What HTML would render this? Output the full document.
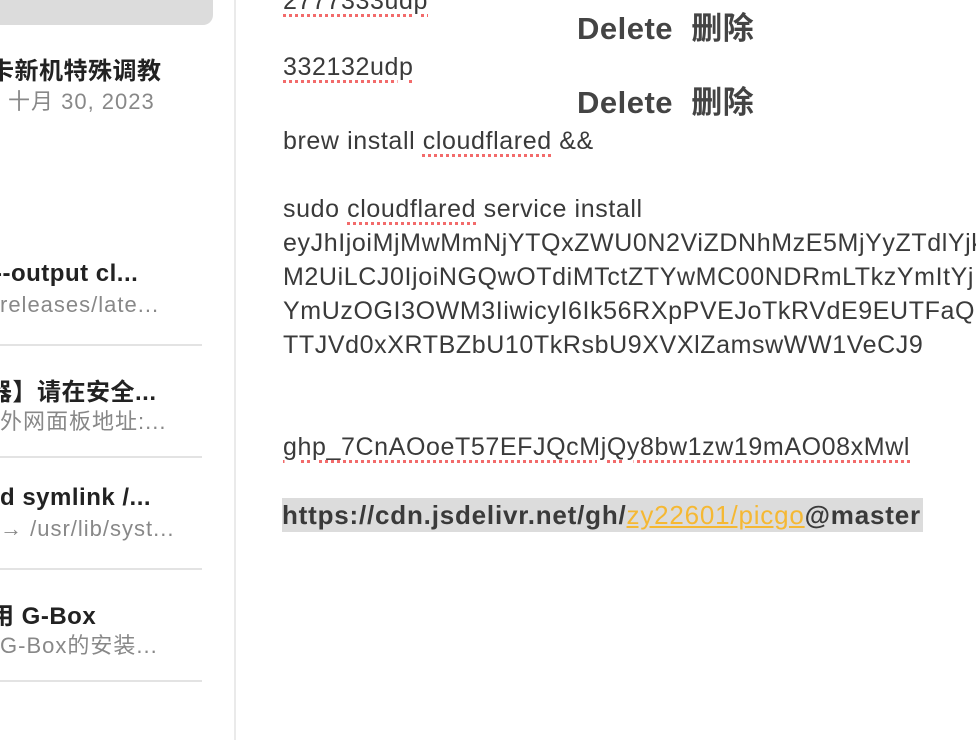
<!DOCTYPE html>
<html><head><meta charset="utf-8"><style>
body{margin:0;width:976px;height:740px;overflow:hidden;background:#fff;font-family:"Liberation Sans","Noto Sans CJK SC",sans-serif;position:relative;color:#3a3a3a}
.a{position:absolute;white-space:nowrap}
.t{font-size:25px;left:283px;line-height:34px;letter-spacing:0.6px}
.sp{text-decoration:underline dotted #f26b6b;text-decoration-thickness:3px;text-underline-offset:5px}
.del{left:577px;font-size:31px;font-weight:bold;color:#444;letter-spacing:0.5px}
.st{font-size:24px;font-weight:bold;color:#222;letter-spacing:0.5px}
.ss{font-size:22px;color:#888;letter-spacing:1px}
.sep{position:absolute;left:0;width:202px;height:2px;background:#e3e3e3}
</style></head><body>
<div class="a" style="left:0;top:0;width:213px;height:25px;background:#dcdcdc;border-radius:0 0 10px 0"></div>
<div class="a" style="left:234px;top:0;width:2px;height:740px;background:#eaeaea"></div>
<div class="a st" style="left:-10px;top:51px">卡新机特殊调教</div>
<div class="a ss" style="left:8px;top:84px">十月 30, 2023</div>
<div class="a st" style="left:-6px;top:260px">--output cl...</div>
<div class="a ss" style="left:0;top:292px">releases/late...</div>
<div class="sep" style="top:344px"></div>
<div class="a st" style="left:-12px;top:372px">器】请在安全...</div>
<div class="a ss" style="left:0;top:404px">外网面板地址:...</div>
<div class="sep" style="top:456px"></div>
<div class="a st" style="left:0;top:484px">d symlink /...</div>
<div class="a ss" style="left:0;top:516px">→ /usr/lib/syst...</div>
<div class="sep" style="top:568px"></div>
<div class="a st" style="left:-10px;top:596px">用 G-Box</div>
<div class="a ss" style="left:0;top:628px">G-Box的安装...</div>
<div class="sep" style="top:680px"></div>

<div class="a t" style="top:-16px"><span class="sp">2777333udp</span></div>
<div class="a del" style="top:3px">Delete&nbsp; 删除</div>
<div class="a t" style="top:50px"><span class="sp">332132udp</span></div>
<div class="a del" style="top:77px">Delete&nbsp; 删除</div>
<div class="a t" style="top:124px">brew install <span class="sp">cloudflared</span> &amp;&amp;</div>
<div class="a t" style="top:192px">sudo <span class="sp">cloudflared</span> service install</div>
<div class="a t" style="top:226px">eyJhIjoiMjMwMmNjYTQxZWU0N2ViZDNhMzE5MjYyZTdlYjk</div>
<div class="a t" style="top:260px">M2UiLCJ0IjoiNGQwOTdiMTctZTYwMC00NDRmLTkzYmItYj</div>
<div class="a t" style="top:294px">YmUzOGI3OWM3IiwicyI6Ik56RXpPVEJoTkRVdE9EUTFaQzB</div>
<div class="a t" style="top:328px">TTJVd0xXRTBZbU10TkRsbU9XVXlZamswWW1VeCJ9</div>
<div class="a t" style="top:430px"><span class="sp">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</span></div>
<div class="a t" style="top:498px;font-weight:bold;background:#dcdcdc;padding-right:2px;left:282px;font-size:26px;letter-spacing:0.8px">https://cdn.jsdelivr.net/gh/<span style="color:#f5b833;font-weight:normal;text-decoration:underline">zy22601/picgo</span>@master</div>
</body></html>
